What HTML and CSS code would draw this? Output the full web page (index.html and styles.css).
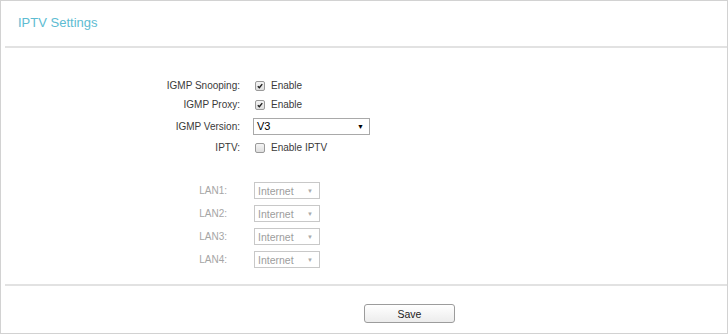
FILE: index.html
```html
<!DOCTYPE html>
<html lang="en">
<head>
  <meta charset="UTF-8">
  <title>IPTV Settings</title>
  <link rel="stylesheet" href="styles.css">
</head>
<body>
  <div class="panel">
    <h2 class="title">IPTV Settings</h2>
    <div class="rule"></div>

    <div class="form">
      <div class="row">
        <span class="label">IGMP Snooping:</span>
        <span class="check on"><svg viewBox="0 0 10 10"><path d="M2.2 5.2 L4.2 7.2 L7.8 2.6" /></svg></span>
        <span class="opt">Enable</span>
      </div>
      <div class="row">
        <span class="label">IGMP Proxy:</span>
        <span class="check on"><svg viewBox="0 0 10 10"><path d="M2.2 5.2 L4.2 7.2 L7.8 2.6" /></svg></span>
        <span class="opt">Enable</span>
      </div>
      <div class="row tall">
        <span class="label">IGMP Version:</span>
        <div class="select wide">
          <span>V3</span>
          <span class="arrow">&#9660;</span>
        </div>
      </div>
      <div class="row">
        <span class="label">IPTV:</span>
        <span class="check"></span>
        <span class="opt">Enable IPTV</span>
      </div>

      <div class="lans">
        <div class="row lan">
          <span class="label">LAN1:</span>
          <div class="select small"><span>Internet</span><span class="arrow">&#9660;</span></div>
        </div>
        <div class="row lan">
          <span class="label">LAN2:</span>
          <div class="select small"><span>Internet</span><span class="arrow">&#9660;</span></div>
        </div>
        <div class="row lan">
          <span class="label">LAN3:</span>
          <div class="select small"><span>Internet</span><span class="arrow">&#9660;</span></div>
        </div>
        <div class="row lan">
          <span class="label">LAN4:</span>
          <div class="select small"><span>Internet</span><span class="arrow">&#9660;</span></div>
        </div>
      </div>
    </div>

    <div class="rule"></div>
    <div class="actions">
      <button type="button">Save</button>
    </div>
  </div>
</body>
</html>
```

FILE: styles.css
```css
body {
  margin: 0;
  font-family: "Liberation Sans", Arial, sans-serif;
  background: #fff;
}
.panel {
  box-sizing: border-box;
  height: 334px;
  border: 1px solid #d2d2d2;
}
.title {
  margin: 0;
  height: 45px;
  padding-left: 17px;
  line-height: 43px;
  font-size: 13px;
  font-weight: normal;
  color: #5dbcd2;
}
.rule {
  margin-left: 4px;
  border-top: 2px solid #e2e2e2;
}
.form {
  padding-top: 28px;
  height: 236px;
  box-sizing: border-box;
}
.row {
  display: flex;
  align-items: center;
  height: 19px;
  font-size: 10px;
  color: #3a3a3a;
}
.row.tall {
  height: 24px;
}
.label {
  width: 239px;
  text-align: right;
}
.check {
  box-sizing: border-box;
  width: 10px;
  height: 10px;
  margin-left: 15px;
  border: 1px solid #9a9a9a;
  border-radius: 2px;
  background: linear-gradient(#f4f4f4, #dedede);
}
.check svg {
  display: block;
  width: 8px;
  height: 8px;
}
.check path {
  fill: none;
  stroke: #222;
  stroke-width: 1.8;
}
.opt {
  margin-left: 6px;
}
.select {
  box-sizing: border-box;
  display: flex;
  align-items: center;
  justify-content: space-between;
  height: 17px;
  margin-left: 13px;
  border: 1px solid #a9a9a9;
  background: #fff;
}
.select.wide {
  width: 117px;
  padding: 0 5px 0 3px;
  font-size: 11px;
  color: #000;
}
.select.wide .arrow {
  font-size: 7px;
}
.lans {
  padding-top: 22px;
}
.row.lan {
  height: 23px;
  color: #a5a5a5;
}
.row.lan .label {
  width: 226px;
}
.select.small {
  width: 66px;
  margin-left: 27px;
  padding: 0 6px 0 3px;
  border-color: #c8c8c8;
  color: #9d9d9d;
  font-size: 10.5px;
}
.select.small .arrow {
  font-size: 6px;
  color: #aaa;
}
.actions {
  padding-top: 18px;
}
button {
  box-sizing: border-box;
  display: block;
  width: 91px;
  height: 19px;
  margin-left: 363px;
  padding: 0;
  border: 1px solid #9c9c9c;
  border-radius: 3px;
  background: linear-gradient(#ffffff, #ececec);
  font-family: "Liberation Sans", Arial, sans-serif;
  font-size: 10.5px;
  color: #222;
}
```
